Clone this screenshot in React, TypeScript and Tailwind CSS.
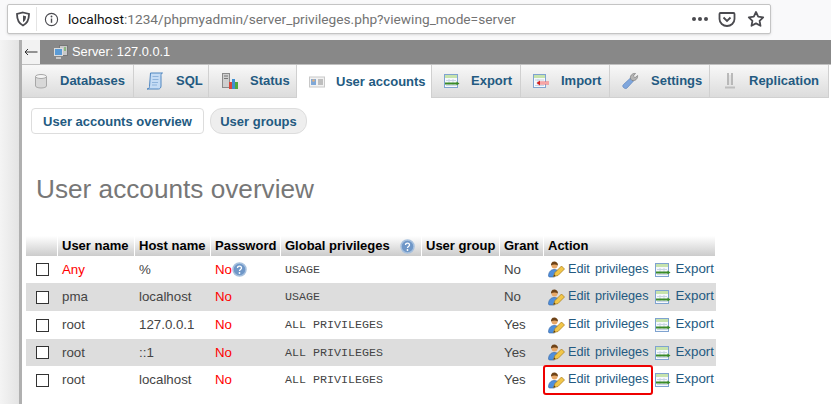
import { ReactNode } from 'react';

const SANS = "font-['Liberation_Sans',Arial,sans-serif]";

function ExportIcon() {
  return (
    <svg width="16" height="16" viewBox="0 0 16 16" className="shrink-0">
      <rect x="0.5" y="1.5" width="13" height="13" fill="#f6f9fd" stroke="#7fa3d0" />
      <path d="M1 3.5h12" stroke="#c6e3ac" strokeWidth="3" />
      <path d="M2 7.5h10M2 12.5h10M5 6v7M9 6v7" stroke="#c8d5e4" />
      <path d="M1 10.5h12" stroke="#3a8a28" strokeWidth="2" />
      <path d="M12.5 8.5l3 2-3 2z" fill="#3a8a28" />
    </svg>
  );
}

function ImportIcon() {
  return (
    <svg width="16" height="16" viewBox="0 0 16 16" className="shrink-0">
      <rect x="0.5" y="1.5" width="12" height="13" fill="#f6f9fd" stroke="#7fa3d0" />
      <path d="M1 3.5h11" stroke="#c6e3ac" strokeWidth="3" />
      <path d="M2 7h9M2 12.5h9M5 6v7" stroke="#c8d5e4" />
      <path d="M7 10h9" stroke="#f06a6a" strokeWidth="3" />
      <path d="M7 10h9" stroke="#ffffff" strokeWidth="0.8" />
      <path d="M7 7.5l-3.500 2.500 3.500 2.500z" fill="#d42020" />
    </svg>
  );
}

function EditIcon() {
  return (
    <svg width="17" height="17" viewBox="0 0 17 17" className="shrink-0">
      <circle cx="6.5" cy="4.500" r="3" fill="#e8a868" />
      <path d="M3 4.500c0-3.500 2-4 3.500-4S10 1.500 10 4.500C8 3 5 3 3 4.500z" fill="#6e4216" />
      <path d="M0.500 15c0-3.500 2-6.500 5.500-6.500 2 0 3.500.5 4.500 1.500l-4 6H2c-1 0-1.500-.5-1.500-1z" fill="#4f8fdc" stroke="#2f5f9f" strokeWidth="0.600" />
      <path d="M5.500 15.500l1.500-4 6.500-6.500 3 3-6.500 6.500z" fill="#f2c648" stroke="#a87a18" strokeWidth="0.700" />
      <path d="M5.500 15.500l.7-2 1.300 1.300z" fill="#5a3a10" />
    </svg>
  );
}

function HelpDot() {
  return (
    <svg width="15" height="15" viewBox="0 0 15 15" className="shrink-0">
      <circle cx="7.5" cy="7.5" r="6.500" fill="#6f97c8" stroke="#a6c0de" strokeWidth="1.500" />
      <path d="M5.500 6c0-2.500 4-2.500 4 0 0 1.500-2 1.500-2 3" fill="none" stroke="#fff" strokeWidth="1.300" />
      <circle cx="7.500" cy="11" r="0.900" fill="#fff" />
    </svg>
  );
}

type TabItem = {
  label: string;
  width: string;
  pad: string;
  active?: boolean;
  icon: ReactNode;
};

const tabs: TabItem[] = [
  {
    label: 'Databases',
    width: 'w-[112px]',
    pad: 'w-[38px]',
    icon: (
      <svg width="16" height="16" viewBox="0 0 16 16">
        <path d="M2.500 3.500v9.500c0 1 2.500 2 5.500 2s5.500-1 5.500-2V3.500z" fill="#d8d8d8" stroke="#a8a8a8" />
        <ellipse cx="8" cy="3.500" rx="5.500" ry="2" fill="#f4f4f4" stroke="#a8a8a8" />
      </svg>
    ),
  },
  {
    label: 'SQL',
    width: 'w-[75px]',
    pad: 'w-[42px]',
    icon: (
      <svg width="18" height="18" viewBox="0 0 18 18">
        <path d="M4.500 1h12c-1 0-1.500 1-1.500 2.500v10.500c0 1.500-1 3-2.500 3H1c1.500 0 2.500-1 2.500-2.500z" fill="#c5dcf5" stroke="#4f86c0" />
        <path d="M6.500 4.500h6M6.500 7.500h6M6 10.500h6M6 13h5" stroke="#8fb4dc" />
      </svg>
    ),
  },
  {
    label: 'Status',
    width: 'w-[88px]',
    pad: 'w-[41px]',
    icon: (
      <svg width="18" height="18" viewBox="0 0 18 18">
        <rect x="1.500" y="1.500" width="7" height="14" fill="#cfcfcf" stroke="#8a8a8a" />
        <path d="M3 4h4M3 6.500h4" stroke="#777" />
        <rect x="8" y="10" width="3" height="7" fill="#d9483b" />
        <rect x="11" y="7" width="3" height="10" fill="#3f8fd0" />
        <rect x="14" y="10" width="3" height="7" fill="#4fa83d" />
      </svg>
    ),
  },
  {
    label: 'User accounts',
    active: true,
    width: 'w-[135px]',
    pad: 'w-[39px]',
    icon: (
      <svg width="16" height="16" viewBox="0 0 16 16">
        <rect x="0.500" y="3" width="15" height="10" fill="#f2f2f2" stroke="#c8c8c8" />
        <rect x="2" y="5" width="5" height="6" fill="#7fa8d8" />
        <circle cx="4.500" cy="6.500" r="1.300" fill="#e0b080" />
        <path d="M9 6h5M9 8h5M9 10h5" stroke="#8a8a8a" />
      </svg>
    ),
  },
  { label: 'Export', width: 'w-[89px]', pad: 'w-[39px]', icon: <ExportIcon /> },
  { label: 'Import', width: 'w-[89px]', pad: 'w-[40px]', icon: <ImportIcon /> },
  {
    label: 'Settings',
    width: 'w-[100px]',
    pad: 'w-[41px]',
    icon: (
      <svg width="18" height="18" viewBox="0 0 18 18">
        <path d="M1.500 15.500c-1-1-1-2 0-3l7-6.500 3 3-6.500 7c-1 1-2.500.5-3.500-.5z" fill="#7fa6dc" stroke="#5c84bd" strokeWidth="0.700" />
        <path d="M8.500 7c-.8-3 1.500-6 5-5.500l-2.200 2.500 1.700 1.700 2.600-2.200c.3 3.500-2.600 5.800-5.600 5z" fill="#b5b5b5" stroke="#7b7b7b" strokeWidth="0.700" />
      </svg>
    ),
  },
  {
    label: 'Replication',
    width: 'w-[119px]',
    pad: 'w-[39px]',
    icon: (
      <svg width="14" height="18" viewBox="0 0 14 18">
        <path d="M5 1v12M9 1v12" stroke="#a8a8a8" strokeWidth="1.500" />
        <path d="M7 3v10" stroke="#d8d8d8" />
        <path d="M2 15.500h10" stroke="#bdbdbd" strokeWidth="2" />
      </svg>
    ),
  },
];

const rows = [
  { user: 'Any', host: '%', priv: 'USAGE', grant: 'No', help: true, height: 'h-[27px]' },
  { user: 'pma', host: 'localhost', priv: 'USAGE', grant: 'No', height: 'h-[28px]' },
  { user: 'root', host: '127.0.0.1', priv: 'ALL PRIVILEGES', grant: 'Yes', height: 'h-[28px]' },
  { user: 'root', host: '::1', priv: 'ALL PRIVILEGES', grant: 'Yes', height: 'h-[27px]' },
  { user: 'root', host: 'localhost', priv: 'ALL PRIVILEGES', grant: 'Yes', marked: true, height: 'h-[28px]' },
];

const COLS = 'grid grid-cols-[32px_77px_76px_70px_141px_78px_44px_172px]';

function Th({ children }: { children?: ReactNode }) {
  return (
    <div className="flex items-center gap-[10px] border-r border-white pl-[4px] text-[13px] font-bold whitespace-nowrap text-black">
      {children}
    </div>
  );
}

export default function App() {
  return (
    <div className={`h-[404px] w-[831px] overflow-hidden bg-white ${SANS}`}>
      <div className="h-[40px] bg-[#f9f9fa] px-[7px] pt-[4px]">
        <div className="flex h-[30px] w-[764px] items-center rounded-[2px] border border-[#c4c4c4] bg-white shadow-sm">
          <svg width="16" height="16" viewBox="0 0 16 16" className="ml-[7px] shrink-0">
            <path d="M8 1.500l6 1.500c0 5-1 9-6 11.500C3 12 2 8 2 3z" fill="none" stroke="#4a4a4f" strokeWidth="1.800" />
            <path d="M8 4.500l3 .8c0 2.500-.6 4.700-3 6z" fill="#4a4a4f" />
          </svg>
          <div className="ml-[5px] h-[24px] w-px bg-[#e4e4e4]" />
          <svg width="15" height="15" viewBox="0 0 16 16" className="ml-[7px] shrink-0">
            <circle cx="8" cy="8" r="6.500" fill="none" stroke="#4a4a4f" strokeWidth="1.200" />
            <path d="M8 7v4.500" stroke="#4a4a4f" strokeWidth="1.500" />
            <circle cx="8" cy="4.800" r="1" fill="#4a4a4f" />
          </svg>
          <div className="ml-[9px] flex-1 font-['Roboto',sans-serif] text-[13.700px] whitespace-nowrap text-[#737373]">
            <span className="text-[#111]">localhost</span>:1234/phpmyadmin/server_privileges.php?viewing_mode=server
          </div>
          <div className="flex gap-[2px] pr-[2px]">
            <span className="h-[4px] w-[4px] rounded-full bg-[#4a4a4f]" />
            <span className="h-[4px] w-[4px] rounded-full bg-[#4a4a4f]" />
            <span className="h-[4px] w-[4px] rounded-full bg-[#4a4a4f]" />
          </div>
          <svg width="18" height="18" viewBox="0 0 18 18" className="ml-[8px] shrink-0">
            <path d="M2.500 3h13c.5 0 1 .5 1 1v5c0 4-3.500 7-7.500 7s-7.500-3-7.500-7V4c0-.5.500-1 1-1z" fill="none" stroke="#4a4a4f" strokeWidth="1.800" />
            <path d="M5.500 7.500L9 11l3.500-3.500" fill="none" stroke="#4a4a4f" strokeWidth="1.800" />
          </svg>
          <svg width="18" height="18" viewBox="0 0 18 18" className="mr-[5px] ml-[11px] shrink-0">
            <path d="M9 2l2.200 4.600 5 .7-3.600 3.500.9 5L9 13.400 4.500 15.800l.9-5L1.800 7.300l5-.7z" fill="none" stroke="#4a4a4f" strokeWidth="1.800" strokeLinejoin="round" />
          </svg>
        </div>
      </div>

      <div className="flex h-[364px]">
        <div className="w-[19px] shrink-0 bg-gradient-to-r from-[#f4f4f4] to-[#e4e4e4]" />
        <div className="w-[3px] shrink-0 bg-[#b0b0b0]" />
        <div className="min-w-0 flex-1">
          <div className="flex h-[24px] items-center bg-[#888888] text-[12.8px] text-white">
            <span className="flex h-full w-[18px] items-center justify-center bg-[#f2f2f2]">
              <svg width="14" height="8" viewBox="0 0 14 8">
                <path d="M1 4h12.500" stroke="#333" />
                <path d="M4 1L1 4l3 3" fill="none" stroke="#333" />
              </svg>
            </span>
            <svg width="16" height="16" viewBox="0 0 16 16" className="ml-[13px] shrink-0">
              <rect x="6.500" y="1.500" width="8" height="10" fill="#c8c8c8" stroke="#777" />
              <path d="M11 4h2M11 6h2" stroke="#4fa83d" />
              <rect x="1.500" y="4.500" width="8" height="7" fill="#5b9bd5" stroke="#dcdcdc" />
              <path d="M3 14h5" stroke="#ddd" strokeWidth="1.500" />
            </svg>
            <span className="ml-[3px]">Server: 127.0.0.1</span>
          </div>

          <div className="flex h-[34px] border-t border-[#c0c0c0]">
            {tabs.map((tab) => (
              <div
                key={tab.label}
                className={`flex h-[33px] items-center ${tab.width} border-r border-[#d0d0d0] ${
                  tab.active ? 'bg-white' : 'border-b bg-gradient-to-b from-[#f8f8f8] to-[#dcdcdc]'
                }`}
              >
                <span className={`flex ${tab.pad} shrink-0 justify-center`}>{tab.icon}</span>
                <span className="whitespace-nowrap text-[13px] font-bold text-[#235a81]">{tab.label}</span>
              </div>
            ))}
          </div>

          <div className="flex gap-[6px] pt-[10px] pl-[9px] text-[13px] font-bold text-[#235a81]">
            <div className="flex h-[26px] w-[173px] items-center justify-center rounded-[4px] border border-[#dddddd] bg-white pt-px">User accounts overview</div>
            <div className="flex h-[26px] w-[97px] items-center justify-center rounded-[12px] border border-[#dddddd] bg-[#eeeeee] pt-px">User groups</div>
          </div>

          <h2 className="pt-[40px] pl-[14px] text-[26.200px] leading-[30px] font-normal text-[#777777]">User accounts overview</h2>

          <div className="mt-[32px] ml-[4px] w-[690px] text-[13.300px] text-[#444444]">
            <div className={`${COLS} h-[20px] bg-gradient-to-b from-[#ffffff] to-[#cccccc]`}>
              <Th />
              <Th>User name</Th>
              <Th>Host name</Th>
              <Th>Password</Th>
              <Th>
                Global privileges
                <HelpDot />
              </Th>
              <Th>User group</Th>
              <Th>Grant</Th>
              <Th>Action</Th>
            </div>
            {rows.map((row, i) => (
              <div key={i} className={`${COLS} ${row.height} items-center ${i % 2 === 1 ? 'bg-[#dddddd]' : 'bg-white'}`}>
                <span className="ml-[10px] h-[13px] w-[13px] border border-[#333] bg-white" />
                <span className={`pl-[4px] ${row.user === 'Any' ? 'text-[#ff0000]' : ''}`}>{row.user}</span>
                <span className="pl-[4px]">{row.host}</span>
                <span className="flex items-center pl-[4px] text-[#ff0000]">
                  No
                  {row.help && <HelpDot />}
                </span>
                <span className="pt-[2px] pl-[4px] font-['Liberation_Mono',monospace] text-[11.670px] text-[#444]">{row.priv}</span>
                <span />
                <span className="pl-[4px]">{row.grant}</span>
                <span className="relative flex h-full items-center pl-[4px] text-[#235a81]">
                  <EditIcon />
                  <span className="ml-[3px] text-[12.700px] [word-spacing:1.500px] whitespace-pre">Edit privileges</span>
                  <span className="ml-[7px]">
                    <ExportIcon />
                  </span>
                  <span className="ml-[4px] -translate-y-[1px]">Export</span>
                  {row.marked && (
                    <span className="absolute top-[-1px] left-[-1px] h-[30px] w-[110px] rounded-[3px] border-2 border-[#ee0000]" />
                  )}
                </span>
              </div>
            ))}
          </div>
        </div>
      </div>
    </div>
  );
}
